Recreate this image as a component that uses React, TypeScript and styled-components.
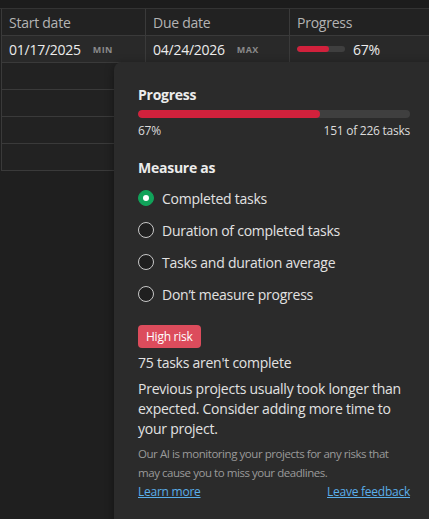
import React from "react";
import styled, { createGlobalStyle } from "styled-components";

const Global = createGlobalStyle`
  html, body { margin: 0; padding: 0; background: #1f1f1f; }
  body { font-family: "Segoe UI", "Open Sans", "Noto Sans", sans-serif; color: #e6e6e6; overflow: hidden; letter-spacing: -0.25px; }
  * { box-sizing: border-box; }
`;

const Page = styled.div`
  position: relative;
  width: 429px;
  height: 519px;
  overflow: hidden;
  background: #1f1f1f;
`;

const TopStrip = styled.div`
  height: 9px;
  background: #1c1c1c;
  border-bottom: 1px solid #333;
`;

const Table = styled.div`
  border-left: 1px solid #3a3a3a;
  margin-left: 1px;
`;

const Row = styled.div<{ $tone?: "head" | "data" | "empty" }>`
  display: grid;
  grid-template-columns: 144px 144px 1fr;
  height: 27px;
  background: ${(p) => (p.$tone === "data" ? "#292929" : "#222")};
  border-bottom: 1px solid #3a3a3a;
`;

const Cell = styled.div<{ $head?: boolean }>`
  display: flex;
  align-items: center;
  gap: 8px;
  padding: 0 7px;
  font-size: 14px;
  color: ${(p) => (p.$head ? "#b4b4b4" : "#ececec")};
  border-right: 1px solid #3a3a3a;
  &:last-child { border-right: none; }
`;

const Tag = styled.span`
  font-size: 9px;
  font-weight: 700;
  letter-spacing: 0.4px;
  color: #8a8a8a;
  margin-left: 4px;
`;

const Track = styled.div<{ $w: number; $h: number }>`
  width: ${(p) => p.$w}px;
  height: ${(p) => p.$h}px;
  border-radius: ${(p) => p.$h}px;
  background: #3f3f3f;
  overflow: hidden;
`;

const Fill = styled.div`
  height: 100%;
  background: #d1213c;
  border-radius: inherit;
`;

const Popover = styled.div`
  position: absolute;
  left: 114px;
  top: 62px;
  width: 330px;
  height: 480px;
  background: #2b2b2b;
  border-radius: 8px 0 0 0;
  box-shadow: 0 2px 10px rgba(0, 0, 0, 0.4);
  padding: 23px 0 0 24px;
`;

const Content = styled.div`
  width: 272px;
`;

const Title = styled.div`
  font-size: 14px;
  font-weight: 700;
  color: #ececec;
  line-height: 20px;
`;

const BarWrap = styled.div`
  margin-top: 5px;
`;

const Split = styled.div`
  display: flex;
  justify-content: space-between;
  font-size: 12px;
  color: #dcdcdc;
  margin-top: 5px;
  line-height: 16px;
`;

const Section = styled.div`
  margin-top: 19px;
`;

const Options = styled.div`
  display: flex;
  flex-direction: column;
  gap: 12px;
  margin-top: 10px;
`;

const Option = styled.label`
  display: flex;
  align-items: center;
  gap: 8px;
  font-size: 14px;
  color: #e2e2e2;
  height: 20px;
`;

const Radio = styled.span<{ $on?: boolean }>`
  width: 16px;
  height: 16px;
  border-radius: 50%;
  flex: none;
  display: flex;
  align-items: center;
  justify-content: center;
  background: ${(p) => (p.$on ? "#11a35a" : "#1f1f1f")};
  border: 1px solid ${(p) => (p.$on ? "#11a35a" : "#c8c8c8")};
  &::after {
    content: "";
    display: ${(p) => (p.$on ? "block" : "none")};
    width: 6px;
    height: 6px;
    border-radius: 50%;
    background: #fff;
  }
`;

const Badge = styled.span`
  display: inline-block;
  margin-top: 21px;
  background: #dc4c5c;
  color: #fff;
  font-size: 12px;
  line-height: 23px;
  padding: 0 8px;
  border-radius: 4px;
`;

const Body = styled.p<{ $gap: number }>`
  margin: ${(p) => p.$gap}px 0 0;
  font-size: 14px;
  line-height: 20px;
  color: #e2e2e2;
`;

const Note = styled.p`
  margin: 5px 0 0;
  font-size: 11.5px;
  letter-spacing: -0.45px;
  line-height: 19px;
  color: #9a9a9a;
`;

const Links = styled.div`
  display: flex;
  justify-content: space-between;
  margin-top: 1px;
  font-size: 12px;
  line-height: 18px;
`;

const Link = styled.a`
  color: #5aaeea;
  text-decoration: underline;
  cursor: pointer;
`;

const options = [
  "Completed tasks",
  "Duration of completed tasks",
  "Tasks and duration average",
  "Don\u2019t measure progress",
];

export default function App() {
  return (
    <Page>
      <Global />
      <TopStrip />
      <Table>
        <Row $tone="head">
          <Cell $head>Start date</Cell>
          <Cell $head>Due date</Cell>
          <Cell $head>Progress</Cell>
        </Row>
        <Row $tone="data">
          <Cell>
            01/17/2025<Tag>MIN</Tag>
          </Cell>
          <Cell>
            04/24/2026<Tag>MAX</Tag>
          </Cell>
          <Cell>
            <Track $w={48} $h={6}>
              <Fill style={{ width: "67%" }} />
            </Track>
            67%
          </Cell>
        </Row>
        {[0, 1, 2, 3].map((i) => (
          <Row key={i} $tone="empty">
            <Cell />
            <Cell />
            <Cell />
          </Row>
        ))}
      </Table>
      <Popover>
        <Content>
          <Title>Progress</Title>
          <BarWrap>
            <Track $w={272} $h={8}>
              <Fill style={{ width: `${(151 / 226) * 100}%` }} />
            </Track>
          </BarWrap>
          <Split>
            <span>67%</span>
            <span>151 of 226 tasks</span>
          </Split>
          <Section>
            <Title>Measure as</Title>
            <Options>
              {options.map((o, i) => (
                <Option key={o}>
                  <Radio $on={i === 0} />
                  {o}
                </Option>
              ))}
            </Options>
          </Section>
          <Badge>High risk</Badge>
          <Body $gap={5}>75 tasks aren't complete</Body>
          <Body $gap={6}>
            Previous projects usually took longer than expected. Consider adding more time to your project.
          </Body>
          <Note>
            Our AI is monitoring your projects for any risks that may cause you to miss your deadlines.
          </Note>
          <Links>
            <Link>Learn more</Link>
            <Link>Leave feedback</Link>
          </Links>
        </Content>
      </Popover>
    </Page>
  );
}
